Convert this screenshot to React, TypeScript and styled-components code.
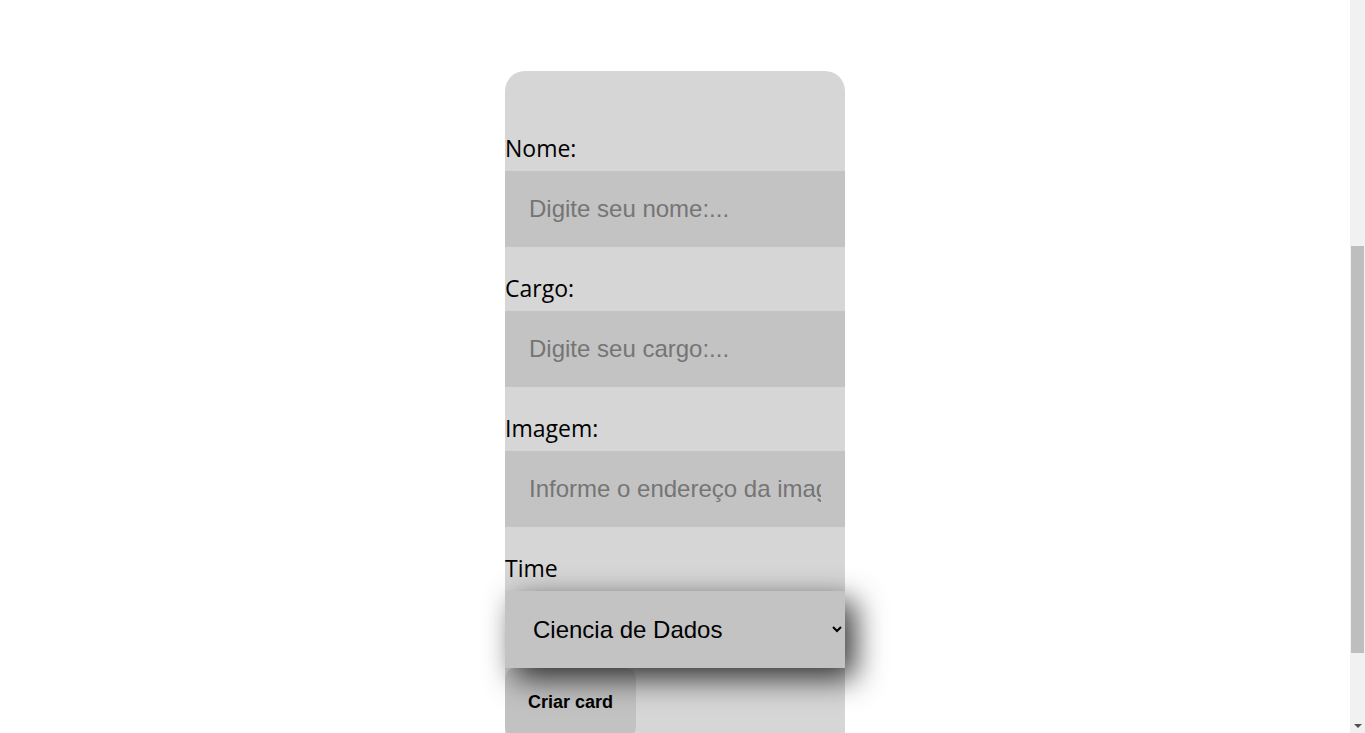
import React, { useLayoutEffect, useState } from "react";
import styled, { createGlobalStyle } from "styled-components";

const GlobalStyle = createGlobalStyle`
  html, body {
    margin: 0;
    padding: 0;
    background: #ffffff;
  }
  body {
    font-family: "Open Sans", "Liberation Sans", Arial, sans-serif;
    color: #000000;
    padding-right: 15px;
  }
  * {
    box-sizing: border-box;
  }
`;

const Page = styled.div`
  display: flex;
  flex-direction: column;
`;

const Hero = styled.header`
  height: 406px;
  background: #ffffff;
`;

const FormSection = styled.section`
  display: flex;
  justify-content: center;
  margin: 80px 0;
`;

const Form = styled.form`
  width: 340px;
  background: #d6d6d6;
  border-radius: 20px;
  padding: 64px 0 32px;
  display: flex;
  flex-direction: column;
`;

const Field = styled.div<{ $last?: boolean }>`
  display: flex;
  flex-direction: column;
  margin-bottom: ${(p) => (p.$last ? "0" : "28px")};
`;

const Label = styled.label`
  font-family: "Open Sans", "Segoe UI", sans-serif;
  font-size: 23px;
  line-height: 26px;
  margin-bottom: 10px;
  color: #000000;
`;

const Input = styled.input`
  width: 100%;
  border: none;
  outline: none;
  background: #c3c3c3;
  padding: 24px;
  font-family: "Liberation Sans", Arial, sans-serif;
  font-size: 24px;
  color: #000000;

  &::placeholder {
    color: #757575;
  }
`;

const Select = styled.select`
  position: relative;
  z-index: 1;
  width: 100%;
  border: none;
  outline: none;
  border-radius: 0;
  background-color: #c3c3c3;
  padding: 24px 6px 24px 24px;
  font-family: "Liberation Sans", Arial, sans-serif;
  font-size: 24px;
  color: #000000;
  box-shadow: 10px 10px 30px rgba(0, 0, 0, 0.78);
`;

const Button = styled.button`
  align-self: flex-start;
  border: none;
  border-radius: 10px;
  background: #c2c2c2;
  padding: 24px 23px;
  font-family: "Liberation Sans", Arial, sans-serif;
  font-weight: 700;
  font-size: 18px;
  color: #000000;
  cursor: pointer;
`;

/* window scrollbar rail, drawn over the right edge of the viewport */
const Rail = styled.div`
  position: fixed;
  top: 0;
  right: 0;
  bottom: 0;
  width: 15px;
  background: #f1f1f1;
  z-index: 10;
`;

const Thumb = styled.div`
  position: absolute;
  left: 1px;
  right: 1px;
  background: #bebebe;
`;

const ArrowDown = styled.div`
  position: absolute;
  left: 0;
  right: 0;
  bottom: 0;
  height: 15px;
  display: flex;
  align-items: center;
  justify-content: center;

  &::after {
    content: "";
    width: 0;
    height: 0;
    border-left: 4px solid transparent;
    border-right: 4px solid transparent;
    border-top: 4px solid #505050;
  }
`;

const ARROW = 15;

const ScrollRail = () => {
  const [thumb, setThumb] = useState({ top: 0, height: 0 });

  useLayoutEffect(() => {
    const update = () => {
      const doc = document.documentElement;
      const track = window.innerHeight - ARROW * 2;
      const total = doc.scrollHeight;
      setThumb({
        top: ARROW + (track * window.scrollY) / total,
        height: (track * window.innerHeight) / total,
      });
    };
    update();
    window.addEventListener("scroll", update);
    window.addEventListener("resize", update);
    return () => {
      window.removeEventListener("scroll", update);
      window.removeEventListener("resize", update);
    };
  }, []);

  return (
    <Rail aria-hidden="true">
      <Thumb style={{ top: thumb.top, height: thumb.height }} />
      <ArrowDown />
    </Rail>
  );
};

const teams = [
  "Programação",
  "Front-End",
  "Ciencia de Dados",
  "Devops",
  "UX e Design",
  "Mobile",
  "Inovação e Gestão",
];

type TextFieldProps = {
  id: string;
  label: string;
  placeholder: string;
};

const TextField = ({ id, label, placeholder }: TextFieldProps) => (
  <Field>
    <Label htmlFor={id}>{label}</Label>
    <Input id={id} placeholder={placeholder} />
  </Field>
);

export default function App() {
  useLayoutEffect(() => {
    window.scrollTo(0, 415);
  }, []);

  return (
    <Page>
      <GlobalStyle />
      <Hero />
      <FormSection>
        <Form onSubmit={(e) => e.preventDefault()}>
          <TextField id="nome" label="Nome:" placeholder="Digite seu nome:..." />
          <TextField id="cargo" label="Cargo:" placeholder="Digite seu cargo:..." />
          <TextField
            id="imagem"
            label="Imagem:"
            placeholder="Informe o endereço da imagem"
          />
          <Field $last>
            <Label htmlFor="time">Time</Label>
            <Select id="time" defaultValue="Ciencia de Dados">
              {teams.map((t) => (
                <option key={t} value={t}>
                  {t}
                </option>
              ))}
            </Select>
          </Field>
          <Button type="submit">Criar card</Button>
        </Form>
      </FormSection>
      <ScrollRail />
    </Page>
  );
}
